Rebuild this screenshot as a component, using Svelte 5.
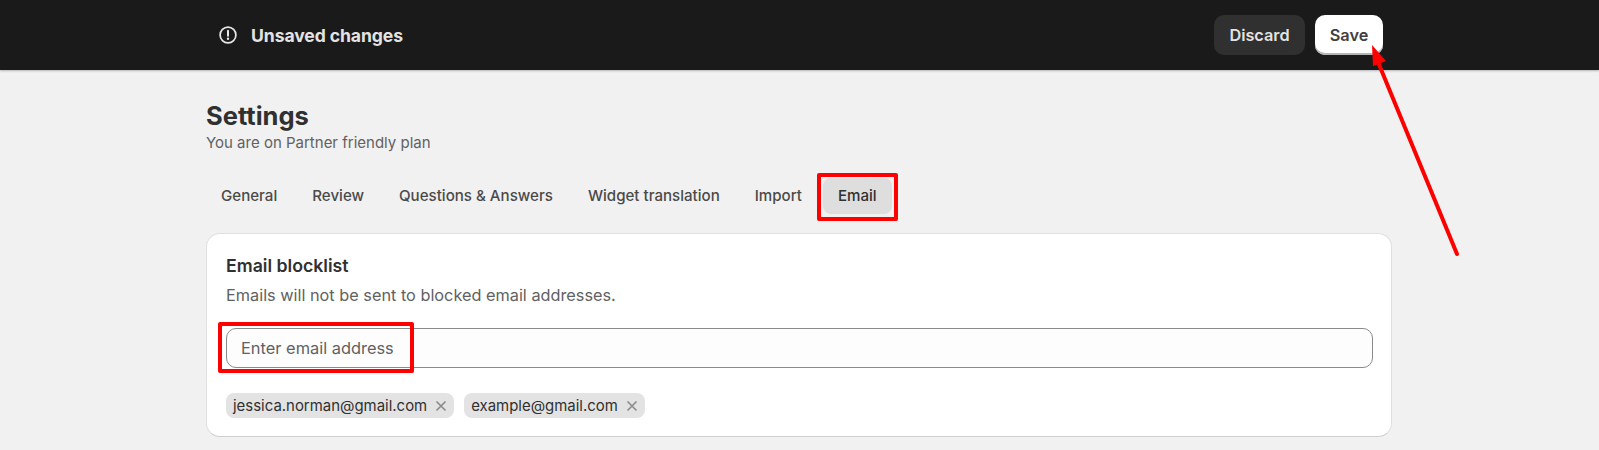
<script>
  const tabs = ['General', 'Review', 'Questions & Answers', 'Widget translation', 'Import', 'Email'];
  const chips = ['jessica.norman@gmail.com', 'example@gmail.com'];
</script>

<div class="page">
  <header class="bar">
    <div class="bar-in">
      <div class="status">
        <svg width="18" height="18" viewBox="0 0 18 18" fill="none">
          <circle cx="9" cy="9" r="7.9" stroke="#e6e6e6" stroke-width="1.7" />
          <path d="M9 4.8v5" stroke="#e6e6e6" stroke-width="2" stroke-linecap="round" />
          <circle cx="9" cy="12.7" r="1.2" fill="#e6e6e6" />
        </svg>
        <span>Unsaved changes</span>
      </div>
      <div class="actions">
        <button class="discard">Discard</button>
        <button class="save">Save</button>
      </div>
    </div>
  </header>

  <main class="main">
    <h1>Settings</h1>
    <p class="sub">You are on Partner friendly plan</p>

    <nav class="tabs">
      {#each tabs as t}
        <span class="tab" class:active={t === 'Email'}>{t}</span>
      {/each}
    </nav>

    <section class="card">
      <h2>Email blocklist</h2>
      <p class="desc">Emails will not be sent to blocked email addresses.</p>
      <input class="field" placeholder="Enter email address" />
      <div class="chips">
        {#each chips as c}
          <span class="chip">
            {c}
            <svg width="12" height="12" viewBox="0 0 12 12" fill="none">
              <path d="M1.5 1.5l9 9M10.5 1.5l-9 9" stroke="#8a8a8a" stroke-width="1.6" />
            </svg>
          </span>
        {/each}
      </div>
    </section>
  </main>

  <div class="mark mark-tab"></div>
  <div class="mark mark-input"></div>
  <svg class="arrow" width="1599" height="450" viewBox="0 0 1599 450" fill="none">
    <path d="M1457 254L1378 62" stroke="#fe0000" stroke-width="4" stroke-linecap="round" />
    <path d="M1372 45L1386 61L1373 66Z" fill="#fe0000" />
  </svg>
</div>

<style>
  :global(body) {
    margin: 0;
    background: #f1f1f1;
  }
  .page {
    position: relative;
    height: 450px;
    overflow: hidden;
    background: #f1f1f1;
    font-family: Inter, "Liberation Sans", sans-serif;
    color: #303030;
  }
  .bar {
    height: 70px;
    background: #1a1a1a;
    box-shadow: 0 1px 2px rgba(0, 0, 0, 0.25);
  }
  .bar-in {
    width: 1164px;
    height: 100%;
    margin-left: 219px;
    display: flex;
    align-items: center;
    justify-content: space-between;
  }
  .status {
    display: flex;
    align-items: center;
    gap: 14px;
    color: #e3e3e3;
    font-size: 17.6px;
    font-weight: 700;
    letter-spacing: -0.1px;
  }
  .status svg { display: block; }
  .actions {
    display: flex;
    gap: 10px;
  }
  button {
    height: 40px;
    border: 0;
    border-radius: 10px;
    font-family: inherit;
    font-size: 16.3px;
    font-weight: 600;
    padding: 0;
  }
  .discard {
    width: 91px;
    background: #303030;
    color: #e3e3e3;
  }
  .save {
    width: 68px;
    background: #fff;
    color: #404040;
    box-shadow: inset 0 -2px 0 #b5b5b5;
  }
  .main {
    width: 1186px;
    margin-left: 206px;
    padding-top: 31px;
  }
  h1 {
    margin: 0;
    font-size: 25.5px;
    line-height: 30px;
    font-weight: 700;
    color: #303030;
  }
  .sub {
    margin: 2px 0 0;
    font-size: 15px;
    line-height: 20px;
    color: #616161;
  }
  .tabs {
    display: flex;
    margin-top: 25px;
    height: 36px;
    align-items: center;
    gap: 5px;
  }
  .tab {
    padding: 0 15px;
    line-height: 36px;
    font-size: 15.1px;
    font-weight: 500;
    color: #4a4a4a;
    border-radius: 8px;
  }
  .active {
    margin-left: 1px;
    background: #dedede;
    color: #303030;
  }
  .card {
    margin-top: 19px;
    box-sizing: border-box;
    height: 204px;
    padding: 21px 18px 0 19px;
    background: #fff;
    border: 1px solid #e0e0e0;
    border-bottom-color: #cfcfcf;
    border-radius: 14px;
  }
  h2 {
    margin: 0;
    font-size: 17.7px;
    line-height: 22px;
    font-weight: 600;
    color: #303030;
  }
  .desc {
    margin: 7px 0 0;
    font-size: 16.3px;
    line-height: 22px;
    color: #616161;
  }
  .field {
    display: block;
    box-sizing: border-box;
    width: 100%;
    height: 40px;
    margin-top: 22px;
    padding: 0 14px 1px;
    border: 1px solid #8a8a8a;
    border-radius: 10px;
    background: #fdfdfd;
    font-family: inherit;
    font-size: 16.4px;
    color: #303030;
    outline: none;
  }
  .field::placeholder {
    color: #616161;
    opacity: 1;
  }
  .chips {
    display: flex;
    gap: 10px;
    margin-top: 25px;
  }
  .chip {
    display: flex;
    align-items: center;
    gap: 8px;
    height: 25px;
    padding: 0 7px;
    border-radius: 8px;
    background: #e3e3e3;
    font-size: 14.95px;
    color: #303030;
  }
  .mark {
    position: absolute;
    box-sizing: border-box;
    border: 4px solid #fe0000;
    border-radius: 2px;
  }
  .mark-tab {
    left: 817px;
    top: 173px;
    width: 81px;
    height: 48px;
  }
  .mark-input {
    left: 218px;
    top: 322px;
    width: 196px;
    height: 51px;
  }
  .arrow {
    position: absolute;
    left: 0;
    top: 0;
    pointer-events: none;
  }
</style>
